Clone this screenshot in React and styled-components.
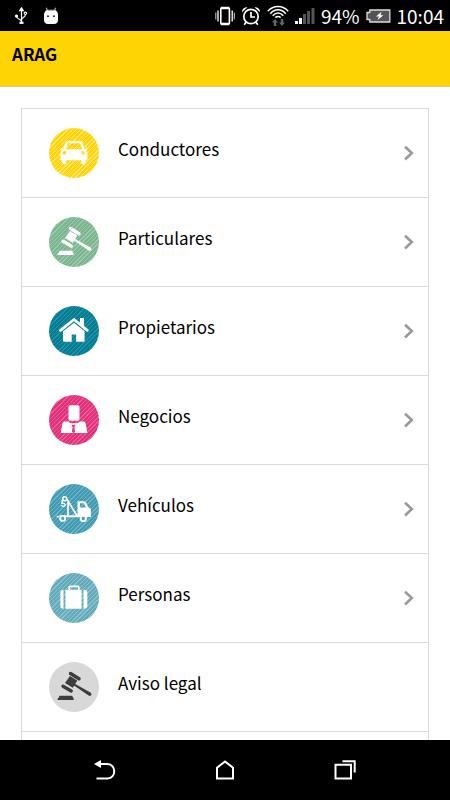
import React from 'react';
import styled, { createGlobalStyle } from 'styled-components';

const GlobalStyle = createGlobalStyle`
  * {
    box-sizing: border-box;
  }
  body {
    margin: 0;
    background: #fff;
    color: #000;
    font-family: "Noto Sans CJK SC", "Noto Sans", sans-serif;
  }
`;

const Screen = styled.div`
  height: 100vh;
  display: flex;
  flex-direction: column;
  overflow: hidden;
`;

const StatusBar = styled.div`
  flex: none;
  height: 31px;
  padding: 0 6px 0 14px;
  display: flex;
  align-items: center;
  justify-content: space-between;
  background: #000;
  color: #fff;
  font-size: 19px;
  line-height: 28px;
`;

const StatusGroup = styled.div`
  display: flex;
  align-items: center;
  gap: ${p => p.$gap}px;

  > svg {
    display: block;
    flex: none;
  }
`;

const Header = styled.header`
  flex: none;
  height: 56px;
  padding: 11px 12px;
  background: #ffd404;
  border-bottom: 1px solid #d8c98a;
`;

const Title = styled.h1`
  margin: 0;
  font-size: 17px;
  font-weight: 700;
  line-height: 24px;
`;

const Content = styled.main`
  flex: 1;
  min-height: 0;
  padding: 21px 21px 0;
  overflow: hidden;
`;

const List = styled.ul`
  margin: 0;
  padding: 0;
  list-style: none;
  border: 1px solid #dadada;
`;

const Item = styled.li`
  height: 89px;
  border-bottom: 1px solid #dadada;
`;

const ItemLink = styled.a`
  height: 100%;
  padding: 0 13px 0 27px;
  display: flex;
  align-items: center;
  color: #000;
  text-decoration: none;

  > svg {
    flex: none;
  }
`;

const Badge = styled.span`
  flex: none;
  width: 50px;
  height: 50px;
  border-radius: 50%;
  overflow: hidden;
  color: ${p => p.$ink || '#fff'};
  background: ${p => `repeating-linear-gradient(135deg, ${p.$color} 0 2px, ${p.$stripe} 2px 3px)`};

  > svg {
    display: block;
  }
`;

const Label = styled.span`
  flex: 1;
  padding: 0 0 8px 19px;
  font-size: 17px;
  line-height: 24px;
`;

const NavBar = styled.nav`
  flex: none;
  height: 60px;
  padding: 0 45px;
  display: flex;
  background: #000;
`;

const NavButton = styled.button`
  flex: 1;
  display: flex;
  align-items: center;
  justify-content: center;
  padding: 0;
  border: none;
  background: none;
  color: #fff;
  cursor: pointer;
`;

const Glyph = ({ children }) => (
  <svg width="50" height="50" viewBox="0 0 50 50" fill="currentColor" aria-hidden="true">
    {children}
  </svg>
);

const CarIcon = () => (
  <Glyph>
    <path
      fillRule="evenodd"
      d="M18.6 13.3h12.8c1 0 1.6.5 2 1.400l2.400 6.300 1.900-.6c.8 0 1 1.400.2 1.800l-1 .4c1 .8 1.500 1.800 1.500 3v6.600h-2v2.600c0 2.200-4.200 2.200-4.200 0v-2.600H17.400v2.600c0 2.200-4.200 2.200-4.200 0v-2.600h-1.800v-6.600c0-1.200.5-2.200 1.400-3l-1-.4c-.8-.4-.6-1.800.2-1.800l1.900.6 2.500-6.300c.4-.9 1.200-1.400 2.200-1.400zM19 15.200l-2.400 6.100h16.800L31 15.200zM15.400 22.900a1.900 1.900 0 1 0 0 3.800 1.900 1.900 0 0 0 0-3.800zM34 22.900a1.900 1.900 0 1 0 0 3.800 1.900 1.900 0 0 0 0-3.800z"
    />
  </Glyph>
);

const GavelIcon = () => (
  <Glyph>
    <path d="M21.5 11.5L30 16.8M14 24.2L22.2 29" stroke="currentColor" strokeWidth="3.4" strokeLinecap="round" />
    <path d="M20.9 14l7.400 4.600-4.500 7.200-7.800-4.800z" />
    <path d="M25.4 21.4l16 9.100c2 1.400.8 4-1.400 3.300L24.600 23.200z" />
    <path d="M11 33.800h11.500c.8 0 1.200.5 1.200 1.400l.9.800v2H8.600v-1.600l1.400-.9c0-1 .3-1.700 1-1.700z" />
  </Glyph>
);

const HouseIcon = () => (
  <Glyph>
    <path d="M11.5 24.3L25 13.5l13.300 10.800" fill="none" stroke="currentColor" strokeWidth="2.8" strokeLinecap="round" strokeLinejoin="round" />
    <path d="M31 12h4v8.500l-4-3.200z" />
    <path d="M25 16.800l10.600 8.500v9.500c0 .6-.3.900-.9.900h-7.600v-7.200h-4.400v7.200H15c-.7 0-1-.3-1-.9v-9.500z" />
  </Glyph>
);

const BusinessIcon = () => (
  <Glyph>
    <rect x="19.5" y="10.2" width="11" height="15.6" rx="1.7" />
    <path d="M16 26.600h3.500l2 1.700h7l2-1.700H34c1.500 0 2.300.6 2.700 2l1.700 9.400H11.700l1.700-9.400c.4-1.400 1.200-2 2.600-2z" />
    <path d="M22.500 29.800h4l-1.100 2.400.7 4.600-1.600 1.400-1.600-1.400.7-4.600z" fill="#e5387f" />
  </Glyph>
);

const TowTruckIcon = () => (
  <Glyph>
    <path
      fillRule="evenodd"
      d="M28.5 17.3h7.700l3.500 6.200 2.200 1.200v8.300H28.500zM30.900 19.300v4.300h6.200l-2.400-4.300z"
    />
    <path d="M10.500 31.200h19v2h-19zM7.700 31.800h2v1.600h-2z" />
    <g fill="none" stroke="currentColor">
      <circle cx="15.7" cy="14.7" r="2" strokeWidth="1.5" />
      <path d="M17.7 14.8l10.3 17M19 18v13.500" strokeWidth="1.7" />
      <path d="M13.4 15.7l-.4 3.600c2.300-.2 3.300.8 3 2-.5 1.600-3 1.400-3.400-.2" strokeWidth="1.4" />
    </g>
    <g fill="#47a0b6" stroke="currentColor" strokeWidth="1.9">
      <circle cx="13.7" cy="34.4" r="2.5" />
      <circle cx="34.3" cy="34.4" r="2.7" />
    </g>
  </Glyph>
);

const SuitcaseIcon = () => (
  <Glyph>
    <path d="M20.2 17v-2.700c0-.7.300-1 1-1h7.600c.7 0 1 .3 1 1V17" fill="none" stroke="currentColor" strokeWidth="1.7" />
    <path d="M14.5 16.700v19c-2 0-3.100-.8-3.100-2.600V19.300c0-1.800 1.100-2.600 3.100-2.600zM16.400 16.700h16.200v19H16.400zM34.5 16.700c2.500 0 3.800.8 3.800 2.600v13.800c0 1.800-1.300 2.600-3.800 2.600z" />
  </Glyph>
);

const ChevronIcon = () => (
  <svg width="12" height="16" viewBox="0 0 12 16" fill="none" stroke="#999" strokeWidth="2.6" aria-hidden="true">
    <path d="M2 1.800L8.800 8 2 14.500" />
  </svg>
);

const UsbIcon = () => (
  <svg width="14" height="18" viewBox="0 0 14 18" fill="none" stroke="#fff" strokeWidth="1.2">
    <path d="M7.500 2v13M2.500 9.500c.5 3 5 2.500 5 5M11.500 7.500c0 3-4 3-4 5.500" />
    <path d="M5.700 3.600L7.500.8l1.800 2.800z" fill="#fff" />
    <path d="M5.500 15.800h4" strokeWidth="2.2" />
    <circle cx="2.5" cy="9" r="1" fill="#fff" />
    <circle cx="11.4" cy="6.3" r="1.2" />
  </svg>
);

const AndroidIcon = () => (
  <svg width="16" height="18" viewBox="0 0 16 18">
    <path d="M4.500 4L3.300.8M11.500 4l1-3.200" stroke="#aaa" strokeWidth="1.2" />
    <path d="M1 8c0-3.300 2-5 4-5h6c2 0 4 1.700 4 5v5c0 2.500-1.500 4-4 4H5c-2.500 0-4-1.500-4-4z" fill="#fff" />
    <path d="M4.500 3.300h7" stroke="#aaa" strokeWidth="1.2" />
    <circle cx="5" cy="9.2" r=".9" />
    <circle cx="11" cy="9.2" r=".9" />
  </svg>
);

const VibrateIcon = () => (
  <svg width="20" height="20" viewBox="0 0 20 20" fill="none" stroke="#fff">
    <rect x="5.8" y="1.8" width="8.6" height="16.4" rx="1" strokeWidth="1.6" />
    <path d="M6 2h8M6 18h8" strokeWidth="2.4" />
    <path d="M3 4.500v11M17.200 4.500v11" strokeWidth="1.3" />
    <path d="M.8 6.500v7M19.300 6.500v7" stroke="#bbb" strokeWidth="1.1" />
  </svg>
);

const AlarmIcon = () => (
  <svg width="20" height="20" viewBox="0 0 20 20" fill="none" stroke="#fff" strokeWidth="1.7">
    <circle cx="10" cy="10.5" r="7.2" />
    <path d="M10 6v5h4" />
    <path d="M5 16.200l-1.800 2.600M15 16.200l1.800 2.600" />
    <path d="M1 6.200c0-3.200 2-5 5.500-5zM19 6.200c0-3.200-2-5-5.500-5z" fill="#fff" stroke="none" />
  </svg>
);

const WifiIcon = () => (
  <svg width="22" height="22" viewBox="0 0 22 22" fill="none" stroke="#fff" strokeWidth="1.5">
    <path d="M.8 6.200c5.500-6.400 15-6.400 20.400 0M3.300 8.700c4.500-5.200 11-5.200 15.400 0M5.700 10.800c3.200-3.600 7.400-3.600 10.600 0M8.300 12.600c1.700-1.500 3.700-1.500 5.400 0" />
    <path d="M8 14l3 3.500H9.200V21H6.800v-3.500H5zM15 21l3-3.500h-1.800V14h-2.400v3.500H12z" fill="#666" stroke="none" />
  </svg>
);

const SignalIcon = () => (
  <svg width="20" height="16" viewBox="0 0 20 16">
    <path d="M0 13h3v3H0zM4 10h3v6H4z" fill="#fff" />
    <path d="M8 6h3v10H8zM12 3h3v13h-3zM16.500 0h3v16h-3z" fill="#555" />
  </svg>
);

const BatteryIcon = () => (
  <svg width="25" height="14" viewBox="0 0 25 14">
    <path d="M3.800 1h20v12h-20v-2.500H1v-7h2.800z" fill="#555" stroke="#ddd" strokeWidth="1.3" />
    <path d="M15.500 2.800L10 7.500h3L11.500 11l6-4.800h-3z" fill="#fff" />
  </svg>
);

const BackIcon = () => (
  <svg width="22" height="20" viewBox="0 0 22 20" fill="none" stroke="#fff" strokeWidth="2" aria-hidden="true">
    <path d="M5 4h8.500c9 0 9 14.500 0 14.500H2.500" />
    <path d="M0 4L7 0v8z" fill="#fff" stroke="none" />
  </svg>
);

const HomeIcon = () => (
  <svg width="20" height="20" viewBox="0 0 20 20" fill="none" stroke="#fff" strokeWidth="2" aria-hidden="true">
    <path d="M2 18.500V7.700l8-6.300 8 6.300v10.800z" />
  </svg>
);

const RecentIcon = () => (
  <svg width="22" height="20" viewBox="0 0 22 20" fill="none" stroke="#fff" strokeWidth="2" aria-hidden="true">
    <path d="M1.500 4.800h15.500v13.700H1.500z" />
    <path d="M8.500 1.200h12.200V12.500" />
  </svg>
);

const items = [
  { name: 'Conductores', icon: CarIcon, color: '#ffd50a', stripe: '#ffe66a' },
  { name: 'Particulares', icon: GavelIcon, color: '#7cb691', stripe: '#9bc9ab' },
  { name: 'Propietarios', icon: HouseIcon, color: '#067c93', stripe: '#1f93a7' },
  { name: 'Negocios', icon: BusinessIcon, color: '#e2307a', stripe: '#ea5c98' },
  { name: 'Vehículos', icon: TowTruckIcon, color: '#429bb2', stripe: '#6cb4c6' },
  { name: 'Personas', icon: SuitcaseIcon, color: '#63aabd', stripe: '#8dc2cf' },
  { name: 'Aviso legal', icon: GavelIcon, color: '#d8d8d8', stripe: '#d8d8d8', ink: '#3c3c3c', plain: true },
];

const App = () => {
  return (
    <Screen>
      <GlobalStyle />
      <StatusBar>
        <StatusGroup $gap={15}>
          <UsbIcon />
          <AndroidIcon />
        </StatusGroup>
        <StatusGroup $gap={6}>
          <VibrateIcon />
          <AlarmIcon />
          <WifiIcon />
          <SignalIcon />
          <span>94%</span>
          <BatteryIcon />
          <span>10:04</span>
        </StatusGroup>
      </StatusBar>
      <Header>
        <Title>ARAG</Title>
      </Header>
      <Content>
        <List>
          {items.map(({ name, icon: Icon, color, stripe, ink, plain }) => (
            <Item key={name}>
              <ItemLink href="#">
                <Badge $color={color} $stripe={stripe} $ink={ink}><Icon /></Badge>
                <Label>{name}</Label>
                {!plain && <ChevronIcon />}
              </ItemLink>
            </Item>
          ))}
          <Item />
        </List>
      </Content>
      <NavBar>
        <NavButton type="button" aria-label="Atrás"><BackIcon /></NavButton>
        <NavButton type="button" aria-label="Inicio"><HomeIcon /></NavButton>
        <NavButton type="button" aria-label="Recientes"><RecentIcon /></NavButton>
      </NavBar>
    </Screen>
  );
};

export default App;
